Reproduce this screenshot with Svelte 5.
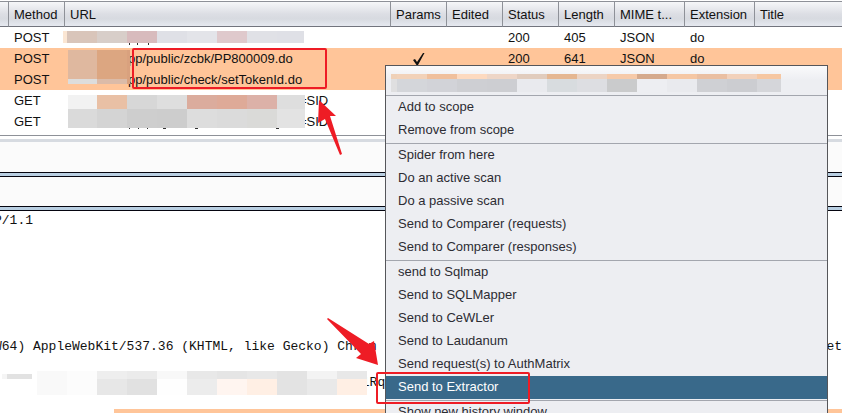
<script lang="ts">
	interface Request {
		method: string;
		url: string;
		params?: boolean;
		status?: string;
		length?: string;
		mime?: string;
		ext?: string;
		marked?: boolean;
	}

	// x, y, width, height, fill
	type Block = [number, number, number, number, string];

	const columns = [
		{ label: '', cls: 'gutter' },
		{ label: 'Method', cls: 'small' },
		{ label: 'URL', cls: 'url' },
		{ label: 'Params', cls: 'small' },
		{ label: 'Edited', cls: 'small' },
		{ label: 'Status', cls: 'small' },
		{ label: 'Length', cls: 'small' },
		{ label: 'MIME t...', cls: 'medium' },
		{ label: 'Extension', cls: 'medium' },
		{ label: 'Title', cls: 'title' }
	];

	const requests: Request[] = [
		{ method: 'POST', url: '', status: '200', length: '405', mime: 'JSON', ext: 'do' },
		{
			method: 'POST',
			url: 'pp/public/zcbk/PP800009.do',
			params: true,
			status: '200',
			length: '641',
			mime: 'JSON',
			ext: 'do',
			marked: true
		},
		{ method: 'POST', url: 'pp/public/check/setTokenId.do', marked: true },
		{ method: 'GET', url: '=SID' },
		{ method: 'GET', url: '=SID' }
	];

	const menuGroups = [
		['Add to scope', 'Remove from scope'],
		[
			'Spider from here',
			'Do an active scan',
			'Do a passive scan',
			'Send to Comparer (requests)',
			'Send to Comparer (responses)'
		],
		[
			'send to Sqlmap',
			'Send to SQLMapper',
			'Send to CeWLer',
			'Send to Laudanum',
			'Send request(s) to AuthMatrix',
			'Send to Extractor'
		],
		['Show new history window']
	];

	let selected = $state('Send to Extractor');

	// masked parts of the URL column
	const urlMask: Block[] = [
		[0, 4, 4, 12, '#fbe6d3'],
		[4, 4, 30, 12, '#d9c5ba'],
		[34, 4, 30, 12, '#d8cec9'],
		[64, 4, 30, 12, '#d8bbbd'],
		[94, 4, 30, 12, '#dfe0e6'],
		[124, 4, 30, 12, '#e3e4e9'],
		[154, 4, 30, 12, '#dfc9cc'],
		[184, 4, 30, 12, '#e0e1e6'],
		[214, 4, 27, 12, '#dfe0e6'],
		[66, 16, 1, 2, '#333'],
		[74, 16, 1, 2, '#333'],
		[85, 16, 1, 2, '#333'],
		[5, 23, 29, 29, '#dfb89f'],
		[34, 23, 30, 29, '#dca681'],
		[64, 23, 3, 34, '#d9a17e'],
		[5, 52, 29, 5, '#dddddc'],
		[34, 52, 30, 5, '#dbbba8'],
		[5, 68, 29, 14, '#f2f2f2'],
		[34, 68, 30, 14, '#e9c0a5'],
		[64, 68, 30, 14, '#d7d7d7'],
		[94, 68, 30, 14, '#dedede'],
		[124, 68, 30, 14, '#dbac9d'],
		[154, 68, 30, 14, '#deaa98'],
		[184, 68, 30, 14, '#dcb1a8'],
		[214, 68, 28, 14, '#dedede'],
		[5, 82, 29, 19, '#dadada'],
		[34, 82, 30, 19, '#d4d4d4'],
		[64, 82, 30, 19, '#cecece'],
		[94, 82, 30, 19, '#cdcdcd'],
		[124, 82, 30, 19, '#dddddd'],
		[154, 82, 30, 19, '#dbdbdb'],
		[184, 82, 30, 19, '#dadad8'],
		[214, 82, 28, 19, '#e3e3e3'],
		[66, 101, 1, 1, '#333'],
		[75, 101, 1, 1, '#333'],
		[84, 101, 1, 1, '#333'],
		[100, 101, 3, 1, '#333'],
		[132, 101, 3, 1, '#333'],
		[213, 101, 3, 1, '#333']
	];

	const menuMask: Block[] = [
		[0, 0, 6, 5, '#efd1b8'],
		[6, 0, 30, 5, '#f2d2b9'],
		[36, 0, 30, 5, '#f0c09d'],
		[66, 0, 30, 5, '#fddac0'],
		[96, 0, 30, 5, '#eed6c7'],
		[126, 0, 30, 5, '#e1ccbd'],
		[156, 0, 30, 5, '#e5b792'],
		[186, 0, 30, 5, '#ecd4c4'],
		[216, 0, 30, 5, '#f6caa9'],
		[246, 0, 30, 5, '#d5aa8d'],
		[276, 0, 30, 5, '#f5c7a4'],
		[306, 0, 30, 5, '#eabfa2'],
		[336, 0, 30, 5, '#f2d1bb'],
		[366, 0, 24, 5, '#f6c7a2'],
		[0, 5, 6, 13, '#dfdfe0'],
		[6, 5, 30, 13, '#d4d6da'],
		[36, 5, 30, 13, '#d2d3d8'],
		[66, 5, 30, 13, '#cecfd3'],
		[96, 5, 30, 13, '#cdced2'],
		[126, 5, 30, 13, '#e9eaee'],
		[156, 5, 30, 13, '#d8dcdf'],
		[186, 5, 30, 13, '#dddee2'],
		[216, 5, 30, 13, '#cacbcc'],
		[246, 5, 30, 13, '#edeef2'],
		[276, 5, 30, 13, '#e9eaee'],
		[306, 5, 30, 13, '#cfd0d4'],
		[336, 5, 30, 13, '#cccdd1'],
		[366, 5, 24, 13, '#d5d6da']
	];

	const cookieMask: Block[] = [
		[0, 3, 5, 5, '#f5f5f5'],
		[5, 3, 25, 5, '#e2e2e2'],
		[35, 0, 30, 24, '#f9f9f9'],
		[65, 0, 30, 24, '#fcfcfc'],
		[95, 0, 30, 8, '#eeeeee'],
		[125, 0, 30, 8, '#ebebeb'],
		[155, 0, 30, 8, '#f8f8f8'],
		[185, 0, 30, 8, '#e8e8e8'],
		[215, 0, 30, 8, '#e5e5e5'],
		[245, 0, 30, 8, '#e8e8e8'],
		[275, 0, 30, 8, '#e3e3e3'],
		[305, 0, 30, 8, '#f3f3f3'],
		[335, 0, 30, 8, '#e8e8e8'],
		[95, 8, 30, 16, '#e7e7e7'],
		[125, 8, 30, 16, '#e1e1e1'],
		[155, 8, 30, 16, '#fefefe'],
		[185, 8, 30, 16, '#ececec'],
		[215, 8, 30, 16, '#fff5f0'],
		[245, 8, 30, 16, '#ffefe4'],
		[275, 8, 30, 16, '#e3e3e3'],
		[305, 8, 30, 16, '#e9e9e9'],
		[335, 8, 30, 16, '#ffefe4']
	];
</script>

{#snippet mask(blocks: Block[], width: number, height: number)}
	<svg {width} {height} shape-rendering="crispEdges" aria-hidden="true">
		{#each blocks as [x, y, w, h, fill]}
			<rect {x} {y} width={w} height={h} {fill} />
		{/each}
	</svg>
{/snippet}

<main class="window">
	<section class="history">
		<table>
			<colgroup>
				{#each columns as column}
					<col class={column.cls} />
				{/each}
			</colgroup>
			<thead>
				<tr>
					{#each columns as column}
						<th scope="col">{column.label}</th>
					{/each}
				</tr>
			</thead>
			<tbody>
				{#each requests as request}
					<tr class:marked={request.marked}>
						<td></td>
						<td>{request.method}</td>
						<td class={request.method === 'GET' ? 'query' : 'path'}>{request.url}</td>
						<td class="check">
							{#if request.params}
								<svg width="12" height="14" viewBox="0 0 12 14" role="img" aria-label="Yes">
									<path d="M0 8 L2 7 L4 10 L10 1 L11.5 1 L5 13 L3.5 13 Z" fill="#111" />
								</svg>
							{/if}
						</td>
						<td></td>
						<td>{request.status ?? ''}</td>
						<td>{request.length ?? ''}</td>
						<td>{request.mime ?? ''}</td>
						<td>{request.ext ?? ''}</td>
						<td></td>
					</tr>
				{/each}
			</tbody>
		</table>
		<div class="url-mask">{@render mask(urlMask, 242, 103)}</div>
	</section>

	<div class="splitter"></div>
	<div class="tabs"></div>
	<div class="rule"></div>
	<div class="tabs short"></div>
	<div class="rule"></div>

	<section class="editor">
		<div class="line">P/1.1</div>
		<div class="line"></div>
		<div class="line"></div>
		<div class="line"></div>
		<div class="line"></div>
		<div class="line"></div>
		<div class="line"></div>
		<div class="line">
			<span>W64) AppleWebKit/537.36 (KHTML, like Gecko) Chrom</span>
			<span>et</span>
		</div>
		<div class="line"></div>
		<div class="line cookie">
			<span>.</span>
			<span class="tail">lRq</span>
			<div class="cookie-mask">{@render mask(cookieMask, 365, 24)}</div>
		</div>
		<div class="line"></div>
		<div class="line found"></div>
	</section>

	<div class="menu" role="menu">
		<div class="target">{@render mask(menuMask, 390, 18)}</div>
		{#each menuGroups as group}
			<div class="group" role="group">
				{#each group as item}
					<button
						type="button"
						role="menuitem"
						class:selected={item === selected}
						onmouseenter={() => (selected = item)}
					>
						{item}
					</button>
				{/each}
			</div>
		{/each}
	</div>

	<svg class="notes" width="842" height="413" aria-hidden="true">
		<g fill="none" stroke="#ee1c25" stroke-width="2">
			<rect x="133" y="49" width="193" height="39" rx="1" />
			<rect x="377" y="373" width="152" height="30" rx="1" />
		</g>
		<g fill="#ee1c25">
			<path d="M319 100 L336 116 L330 116 L342 154 L340 155 L325 119 L318 123 Z" />
			<path d="M378 365 L374 341 L369 344 L328 318 L327 319 L361 354 L356 358 Z" />
		</g>
	</svg>
</main>

<style>
	:global(body) {
		margin: 0;
	}

	.window {
		position: relative;
		display: flex;
		flex-direction: column;
		height: 100vh;
		overflow: hidden;
		background: #fff;
		color: #111;
		font-family: 'Liberation Sans', Arial, sans-serif;
		font-size: 13px;
	}

	.history {
		position: relative;
		flex: none;
		padding: 1px 0 3px;
		border-bottom: 1px solid #8e9198;
	}

	table {
		width: 100%;
		table-layout: fixed;
		border-collapse: separate;
		border-spacing: 0;
	}

	.gutter {
		width: 9px;
	}

	.small {
		width: 56px;
	}

	.medium {
		width: 70px;
	}

	.url {
		width: 326px;
	}

	th,
	td {
		box-sizing: border-box;
		padding: 0 0 0 5px;
		overflow: hidden;
		text-align: left;
		font-weight: normal;
		white-space: nowrap;
	}

	th {
		height: 26px;
		border-top: 1px solid #8e9198;
		border-right: 1px solid #8e9198;
		border-bottom: 1px solid #72747d;
		background: linear-gradient(#f6f7f9, #dcdee4 50%, #d7dae0 70%, #e6e9f0);
	}

	th:last-child {
		border-right: 0;
	}

	td {
		height: 21px;
	}

	.marked {
		background: #ffc599;
	}

	.path {
		padding-left: 63px;
	}

	.query {
		padding-left: 234px;
	}

	.check {
		padding: 0;
		text-align: center;
	}

	svg {
		display: block;
	}

	.check svg {
		margin: 0 auto;
	}

	.url-mask {
		position: absolute;
		top: 27px;
		left: 63px;
	}

	.splitter {
		flex: none;
		height: 3px;
		border-top: 3px solid #fff;
		background: #d7dbe1;
	}

	.tabs {
		flex: none;
		height: 30px;
		background: #fbfbfb;
	}

	.tabs.short {
		height: 29px;
	}

	.rule {
		flex: none;
		height: 3px;
		border: solid #05050f;
		border-width: 1px 0;
		background: #b9cfe2;
	}

	.editor {
		flex: 1;
		min-height: 0;
		overflow: hidden;
		font-family: 'Liberation Mono', monospace;
	}

	.line {
		display: flex;
		justify-content: space-between;
		height: 18px;
		margin-left: -6px;
		line-height: 20px;
		white-space: pre;
	}

	.cookie {
		position: relative;
		justify-content: flex-start;
	}

	.tail {
		margin-left: 360px;
	}

	.cookie-mask {
		position: absolute;
		top: -2px;
		left: 8px;
	}

	.found {
		margin-left: 114px;
		background: #ffc599;
	}

	.menu {
		position: absolute;
		top: 65px;
		left: 385px;
		box-sizing: border-box;
		min-width: 443px;
		border: 1px solid #55565a;
		background: linear-gradient(#fafafb, #edeef2 14px);
	}

	.target {
		padding: 8px 5px 2px;
	}

	.group {
		display: flex;
		flex-direction: column;
		margin-top: 1px;
		border-top: 1px solid #a3a6ae;
	}

	button {
		height: 23px;
		padding: 0 12px 2px;
		border: 0;
		background: none;
		color: #2c2c33;
		font: inherit;
		text-align: left;
	}

	button.selected {
		background: #39698a;
		color: #fff;
	}

	.notes {
		position: absolute;
		top: 0;
		left: 0;
		pointer-events: none;
	}
</style>
